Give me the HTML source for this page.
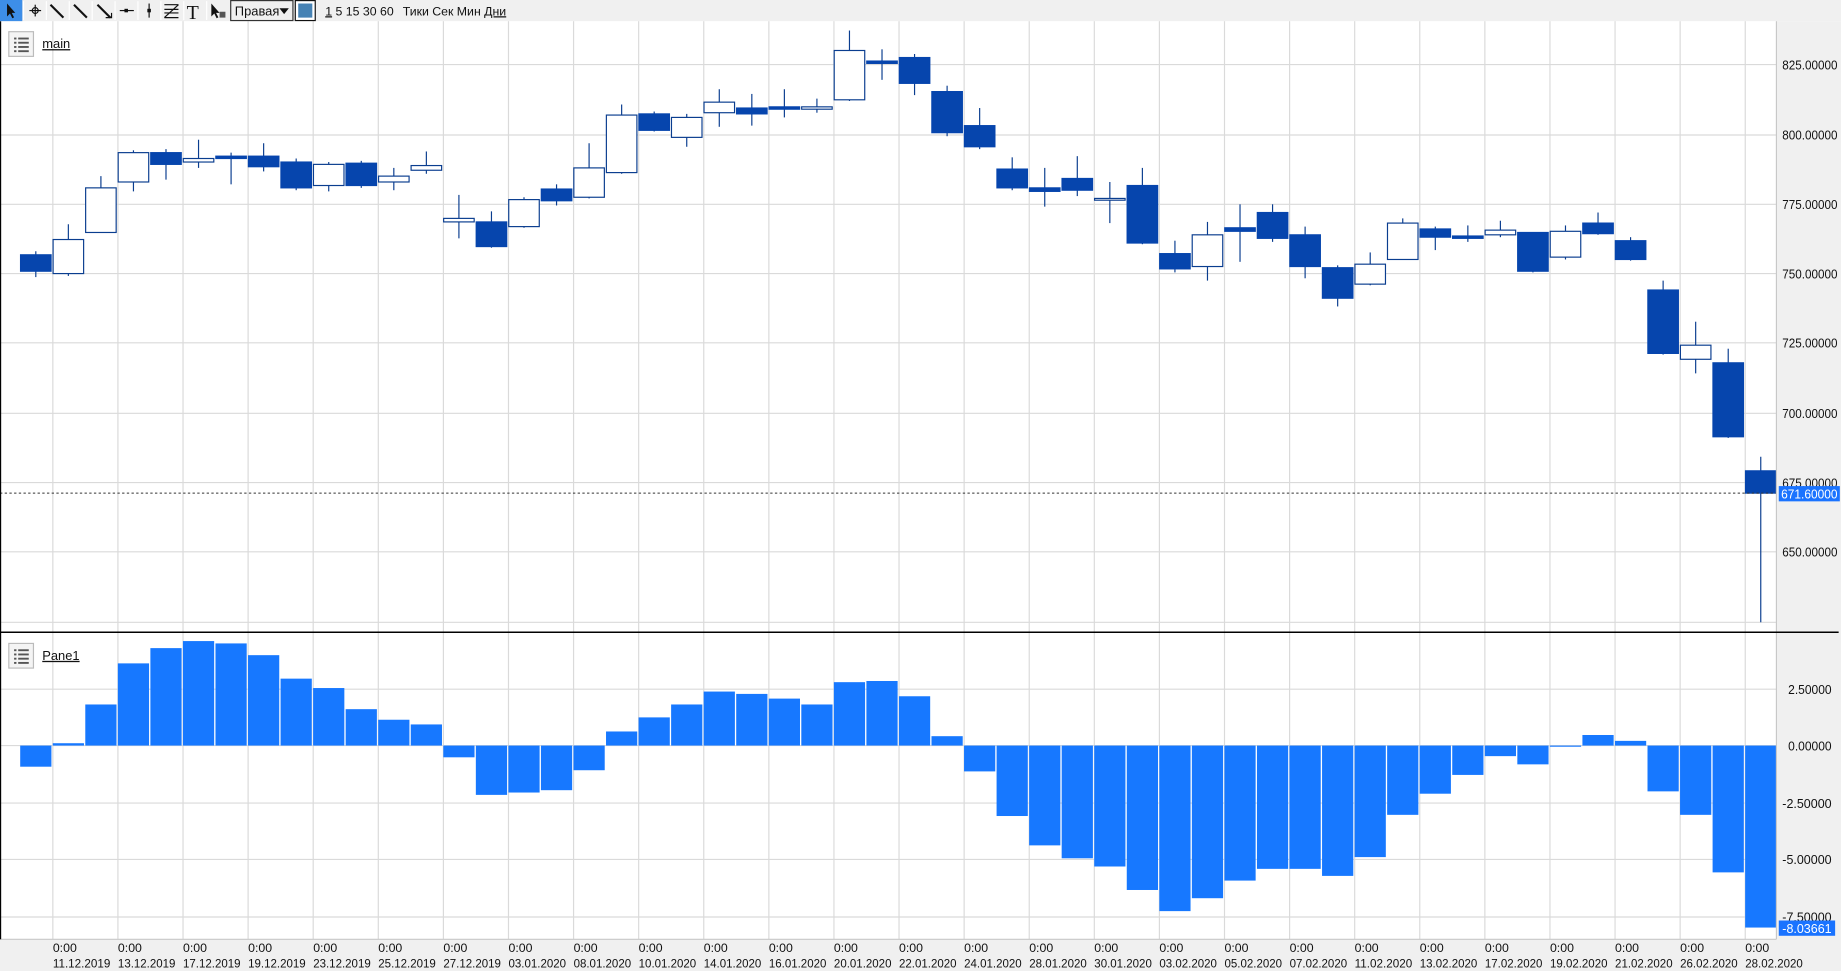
<!DOCTYPE html>
<html><head><meta charset="utf-8"><style>
html,body{margin:0;padding:0;background:#fff;width:1841px;height:971px;overflow:hidden}
svg{display:block}
text{font-family:"Liberation Sans","DejaVu Sans",sans-serif}
text.serif{font-family:"Liberation Serif",serif}
</style></head><body>
<svg id="s" width="1841" height="971" viewBox="0 0 1568 827" preserveAspectRatio="none" xmlns="http://www.w3.org/2000/svg"></svg>
<script>
var C=[[217,231,214,236,1],[204,233,191,235,0],[160,198,150,198,0],[130,155,128,163,0],[130,140,127,153,1],[135,138,119,143,0],[133,135,130,157,1],[133,142,122,146,1],[138,160,135,162,1],[140,158,138,163,0],[139,158,137,160,1],[150,155,143,162,0],[141,145,129,148,0],[186,189,166,203,0],[189,210,180,211,1],[170,193,168,194,0],[161,171,157,175,1],[143,168,122,169,0],[98,147,89,148,0],[97,111,95,112,1],[100,117,97,125,0],[87,96,76,108,0],[92,97,80,107,1],[91,93,76,100,1],[91,93,84,96,0],[43,85,26,86,0],[52,54,42,68,1],[49,71,46,81,1],[78,113,73,116,1],[107,125,92,127,1],[144,160,134,162,1],[160,163,143,176,1],[152,162,133,167,1],[169,170,155,190,0],[158,207,143,208,1],[216,229,205,232,1],[200,227,189,239,0],[194,197,174,223,1],[181,203,174,206,1],[200,227,193,237,1],[228,254,226,261,1],[225,242,215,243,0],[190,221,186,221,0],[195,202,193,213,1],[201,203,192,206,1],[196,200,188,202,0],[198,231,198,232,1],[197,219,192,221,0],[190,199,181,200,1],[205,221,202,222,1],[247,301,239,302,1],[294,306,274,318,0],[309,372,297,373,1],[401,420,389,530,1]];
var H=[653,633,600,565,552,546,548,558,578,586,604,613,617,645,677,675,673,656,623,611,600,589,591,595,600,581,580,593,627,657,695,720,731,738,758,776,765,750,740,740,746,730,694,676,660,644,651,636,626,631,674,694,743,790];
var o='';
o+='<rect x="0" y="0" width="1568" height="827" fill="#fff"/>';
for(var i=0;i<27;i++){var x=45+i*55.44;o+='<line x1="'+x+'" y1="18" x2="'+x+'" y2="800" stroke="#dadada" stroke-width="1"/>';}
var py=[55,115,174,233,292,352,411,470,530];
py.forEach(function(y){o+='<line x1="0" y1="'+y+'" x2="1513" y2="'+y+'" stroke="#dadada"/>';});
[587,635,684,732,781].forEach(function(y){o+='<line x1="0" y1="'+y+'" x2="1513" y2="'+y+'" stroke="#dadada"/>';});
C.forEach(function(c,i){var x=30.5+27.72*i;
o+='<line x1="'+x+'" y1="'+c[2]+'" x2="'+x+'" y2="'+c[3]+'" stroke="#0a3d8f" stroke-width="1"/>';
var h=Math.max(c[1]-c[0],1.5);
o+='<rect x="'+(x-13)+'" y="'+c[0]+'" width="26" height="'+h+'" fill="'+(c[4]?'#0645ad':'#fff')+'" stroke="'+(c[4]?'#0645ad':'#0a3d8f')+'" stroke-width="1"/>';});
H.forEach(function(v,i){var x=30.5+27.72*i-13.3;var y1=Math.min(v,635),y2=Math.max(v,635);
o+='<rect x="'+x+'" y="'+y1+'" width="26.6" height="'+(y2-y1)+'" fill="#1778ff"/>';});
o+='<line x1="0" y1="420" x2="1513" y2="420" stroke="#333" stroke-dasharray="2,2" stroke-width="0.8"/>';
o+='<rect x="1513" y="18" width="55" height="809" fill="#f0f0f0"/>';
o+='<line x1="1513" y1="18" x2="1513" y2="800" stroke="#c8c8c8"/>';
o+='<rect x="0" y="800" width="1568" height="27" fill="#f0f0f0"/>';
o+='<line x1="0" y1="800" x2="1513" y2="800" stroke="#c8c8c8"/>';
o+='<line x1="0" y1="538.5" x2="1566" y2="538.5" stroke="#000" stroke-width="1.2"/>';
o+='<line x1="0.5" y1="18" x2="0.5" y2="800" stroke="#000"/>';
function T(x,y,t,w,fill){return '<text x="'+x+'" y="'+y+'" font-size="11" fill="'+(fill||'#111')+'" textLength="'+w+'" lengthAdjust="spacingAndGlyphs">'+t+'</text>';}
var pl=['825.00000','800.00000','775.00000','750.00000','725.00000','700.00000','675.00000','650.00000'];
pl.forEach(function(t,i){o+=T(1518,py[i]+4,t,47);});
['2.50000','0.00000','-2.50000','-5.00000','-7.50000'].forEach(function(t,i){var y=[587,635,684,732,781][i];o+=t[0]=='-'?T(1518,y+4,t,42):T(1523,y+4,t,37);});
o+='<rect x="1515" y="414" width="52" height="13" fill="#1a73ff"/>'+T(1517,424.5,'671.60000',48,'#fff');
o+='<rect x="1515" y="784" width="48" height="13" fill="#1a73ff"/>'+T(1518,794.5,'-8.03661',42,'#fff');
var D=['11.12.2019','13.12.2019','17.12.2019','19.12.2019','23.12.2019','25.12.2019','27.12.2019','03.01.2020','08.01.2020','10.01.2020','14.01.2020','16.01.2020','20.01.2020','22.01.2020','24.01.2020','28.01.2020','30.01.2020','03.02.2020','05.02.2020','07.02.2020','11.02.2020','13.02.2020','17.02.2020','19.02.2020','21.02.2020','26.02.2020','28.02.2020'];
D.forEach(function(d,i){var x=45+i*55.44;o+='<text x="'+x+'" y="811" font-size="10.5" fill="#111">0:00</text><text x="'+x+'" y="824" font-size="10.5" fill="#111" textLength="49" lengthAdjust="spacingAndGlyphs">'+d+'</text>';});
function pic(y,label){o+='<rect x="7.5" y="'+y+'" width="21" height="21" fill="#f4f4f4" stroke="#bbb"/>';
for(var k=0;k<4;k++){var yy=y+5+k*3.6;o+='<rect x="12" y="'+yy+'" width="2" height="1.6" fill="#555"/><rect x="15.5" y="'+yy+'" width="9" height="1.6" fill="#555"/>';}
o+='<text x="36" y="'+(y+14)+'" font-size="11" fill="#111" text-decoration="underline">'+label+'</text>';}
pic(27,'main');pic(548,'Pane1');
o+='<rect x="0" y="0" width="1568" height="18" fill="#f0f0f0"/>';
o+='<rect x="0" y="0" width="19" height="18" fill="#3d8ee8"/>';
o+='<path d="M6 3 L6 14 L8.5 11.5 L10.5 15.5 L12 14.8 L10 11 L13 11 Z" fill="#111"/>';
var ic=['<circle cx="30" cy="9" r="2.5" fill="none" stroke="#111"/><line x1="25" y1="9" x2="35" y2="9" stroke="#111"/><line x1="30" y1="4" x2="30" y2="14" stroke="#111"/>',
'<line x1="43" y1="4" x2="54" y2="15" stroke="#111" stroke-width="1.8"/>',
'<line x1="63" y1="4" x2="74" y2="15" stroke="#111" stroke-width="1.8"/>',
'<line x1="83" y1="4" x2="94" y2="15" stroke="#111" stroke-width="1.8"/><path d="M90 15 L95 15 L95 11" fill="none" stroke="#111"/>',
'<line x1="102" y1="9" x2="114" y2="9" stroke="#111"/><rect x="106" y="7.5" width="3" height="3" fill="#111"/>',
'<line x1="127" y1="3" x2="127" y2="15" stroke="#111"/><rect x="125.5" y="7.5" width="3" height="3" fill="#111"/>',
'<path d="M140 4H152M140 8H152M140 11H152M140 15H152M140 15L152 4" stroke="#111" fill="none"/>',
'<text class="serif" x="159" y="16" font-size="17" fill="#111">T</text>',
'<path d="M180 3 L180 14 L182.5 11.5 L184.5 15.5 L186 14.8 L184 11 L187 11 Z" fill="#111"/><rect x="187" y="10" width="5" height="5" fill="#555"/>'];
ic.forEach(function(s){o+=s;});
for(var b=20;b<=180;b+=19.5){o+='<line x1="'+b+'" y1="1" x2="'+b+'" y2="17" stroke="#fff"/>';}
o+='<rect x="196.5" y="0.5" width="53" height="17" fill="#f0f0f0" stroke="#333"/><text x="200" y="13" font-size="11" fill="#111">Правая</text><path d="M238 7 L246 7 L242 12 Z" fill="#111"/>';
o+='<rect x="251.5" y="0.5" width="17" height="17" fill="#fff" stroke="#111"/><rect x="254" y="3" width="12" height="12" fill="#4682b4"/>';
o+='<text x="277" y="13" font-size="10.5" fill="#111"><tspan text-decoration="underline">1</tspan> 5 15 30 60</text>';
o+='<text x="343" y="13" font-size="10.5" fill="#111">Тики Сек Мин <tspan text-decoration="underline">Дни</tspan></text>';
document.getElementById('s').innerHTML=o;
</script>
</body></html>
